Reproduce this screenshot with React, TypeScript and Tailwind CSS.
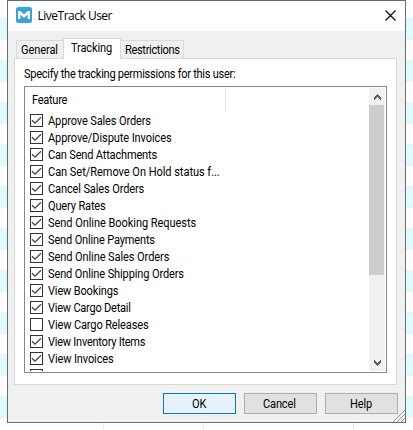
const features: { label: string; checked: boolean; tracking: string }[] = [
  { label: "Approve Sales Orders", checked: true, tracking: "tracking-[-0.15px]" },
  { label: "Approve/Dispute Invoices", checked: true, tracking: "tracking-[-0.11px]" },
  { label: "Can Send Attachments", checked: true, tracking: "tracking-[-0.2px]" },
  { label: "Can Set/Remove On Hold status f...", checked: true, tracking: "tracking-[-0.05px]" },
  { label: "Cancel Sales Orders", checked: true, tracking: "tracking-[-0.14px]" },
  { label: "Query Rates", checked: true, tracking: "tracking-[-0.17px]" },
  { label: "Send Online Booking Requests", checked: true, tracking: "tracking-[-0.07px]" },
  { label: "Send Online Payments", checked: true, tracking: "tracking-[-0.18px]" },
  { label: "Send Online Sales Orders", checked: true, tracking: "tracking-[-0.1px]" },
  { label: "Send Online Shipping Orders", checked: true, tracking: "tracking-[-0.14px]" },
  { label: "View Bookings", checked: true, tracking: "tracking-[-0.18px]" },
  { label: "View Cargo Detail", checked: true, tracking: "tracking-[-0.26px]" },
  { label: "View Cargo Releases", checked: false, tracking: "tracking-[-0.15px]" },
  { label: "View Inventory Items", checked: true, tracking: "tracking-[-0.28px]" },
  { label: "View Invoices", checked: true, tracking: "tracking-[-0.14px]" },
  { label: "", checked: false, tracking: "" },
];

function Label({ text, className = "" }: { text: string; className?: string }) {
  return <span className={`inline-block origin-left scale-x-[0.92] whitespace-pre ${className}`}>{text}</span>;
}

function Checkbox({ checked }: { checked: boolean }) {
  return (
    <span className="flex h-[13px] w-[13px] shrink-0 items-center justify-center border border-[#333] bg-white">
      {checked && (
        <svg width="11" height="11" viewBox="0 0 11 11" fill="none" stroke="#444" strokeWidth="1.3">
          <path d="M1 5.2 4 8.2 10 2.2" />
        </svg>
      )}
    </span>
  );
}

function Backdrop() {
  return (
    <div className="absolute inset-0 flex flex-col overflow-hidden bg-white">
      <div className="h-[18px] shrink-0" />
      {Array.from({ length: 10 }, (_, i) => (
        <div key={i} className="h-[42px] shrink-0">
          <div className="h-[22px] border-y border-[#ecf3f3] bg-[#e0fbff]" />
        </div>
      ))}
    </div>
  );
}

function BackdropColumns() {
  return (
    <div className="flex h-[7px] bg-white">
      <div className="w-[104px] border-r border-[#ececec]" />
      <div className="w-[100px] border-r border-[#ececec]" />
      <div className="w-[150px] border-r border-[#ececec]" />
    </div>
  );
}

function Chevron({ down = false }: { down?: boolean }) {
  return (
    <svg width="7" height="6" viewBox="0 0 7 6" className={down ? "rotate-180" : ""} fill="#606060" shapeRendering="crispEdges">
      <path d="M3 0h1v1h1v1h1v1h1v3h-1v-1h-1v-1h-1v-1h-1v1h-1v1h-1v1h-1v-3h1v-1h1v-1h1z" />
    </svg>
  );
}

export default function App() {
  return (
    <div className="relative h-[430px] w-[413px] overflow-hidden bg-white font-['Roboto',sans-serif] text-[12px] leading-[17px] tracking-[-0.15px] text-black">
      <Backdrop />
      <div className="relative">
        <div className="ml-[7px] flex h-[423px] w-[399px] flex-col border border-[#6b6b6b] bg-[#f0f0f0]">
          <header className="flex h-[30px] shrink-0 items-center bg-white pr-[9px] pb-0.5 pl-2">
            <svg width="16" height="16" viewBox="0 0 16 16">
              <rect width="16" height="16" rx="2.5" fill="#35a3d4" />
              <path d="M2 12V4H4.4L8 7.6 11.6 4H14v8h-2.4V7.6L8 11 4.4 7.6V12z" fill="#fff" />
            </svg>
            <h1 className="ml-[5.5px] font-['Open_Sans',sans-serif] text-[12px] tracking-[-0.5px]">LiveTrack User</h1>
            <svg className="mt-px ml-auto" width="11" height="11" viewBox="0 0 11 11" stroke="#000" strokeWidth="1.1">
              <path d="M.5.5l10 10M10.5.5l-10 10" />
            </svg>
          </header>

          <nav className="mt-[7px] flex h-5 shrink-0 items-end pl-2">
            <div className="h-[18px] w-[48px] border-x border-t border-[#d9d9d9] pl-1 leading-[18px]">
              <Label text="General" className="tracking-[-0.1px]" />
            </div>
            <div className="relative -mb-px -ml-px h-[21px] w-[58px] border-x border-t border-[#d9d9d9] bg-white pl-[7px] leading-[19px]">
              <Label text="Tracking" />
            </div>
            <div className="h-[18px] w-[63px] border-t border-r border-[#d9d9d9] pl-1 leading-[18px]">
              <Label text="Restrictions" className="tracking-[-0.36px]" />
            </div>
          </nav>

          <main className="ml-1.5 h-[327px] w-[383px] shrink-0 border border-[#d9d9d9] bg-white pt-[7px] pl-[9px]">
            <p className="h-5">
              <Label text="Specify the tracking permissions for this user:" className="tracking-[-0.29px]" />
            </p>
            <div className="flex h-[287px] w-[363px] border border-[#828790] py-px pr-px">
              <div className="min-w-0 flex-1 overflow-hidden">
                <div className="flex h-6 items-center">
                  <div className="h-full w-[201px] border-r border-[#e2e2e2] pl-[7px] leading-[25px]">
                    <Label text="Feature" className="tracking-[-0.3px]" />
                  </div>
                </div>
                <ul>
                  {features.map((f, i) => (
                    <li key={i} className="flex h-[17px] items-center gap-[5px] pl-[5px]">
                      <Checkbox checked={f.checked} />
                      <Label text={f.label} className={`pt-0.5 ${f.tracking}`} />
                    </li>
                  ))}
                </ul>
              </div>
              <div className="flex w-4 flex-col items-center bg-[#f0f0f0]">
                <div className="flex h-[17px] items-center justify-center"><Chevron /></div>
                <div className="h-[170px] w-full border-r border-[#f0f0f0] bg-[#cdcdcd]" />
                <div className="mt-auto flex h-[17px] items-center justify-center"><Chevron down /></div>
              </div>
            </div>
          </main>

          <footer className="relative flex gap-2 pt-2 pl-[155px]">
            <button className="h-[21px] w-[73px] border border-[#0078d7] bg-[#e5f1fb] pt-px">
              <Label text="OK" className="origin-center" />
            </button>
            <button className="h-[21px] w-[73px] border border-[#adadad] bg-[#e1e1e1] pt-px">
              <Label text="Cancel" className="origin-center" />
            </button>
            <button className="h-[21px] w-[73px] border border-[#adadad] bg-[#e1e1e1] pt-px">
              <Label text="Help" className="origin-center" />
            </button>
            <svg className="absolute top-[25px] right-0" width="12" height="12" viewBox="0 0 12 12" stroke="#999" strokeWidth="1">
              <path d="M0 12 12 0M4 12l8-8M8 12l4-4" />
            </svg>
          </footer>
        </div>
        <BackdropColumns />
      </div>
    </div>
  );
}
